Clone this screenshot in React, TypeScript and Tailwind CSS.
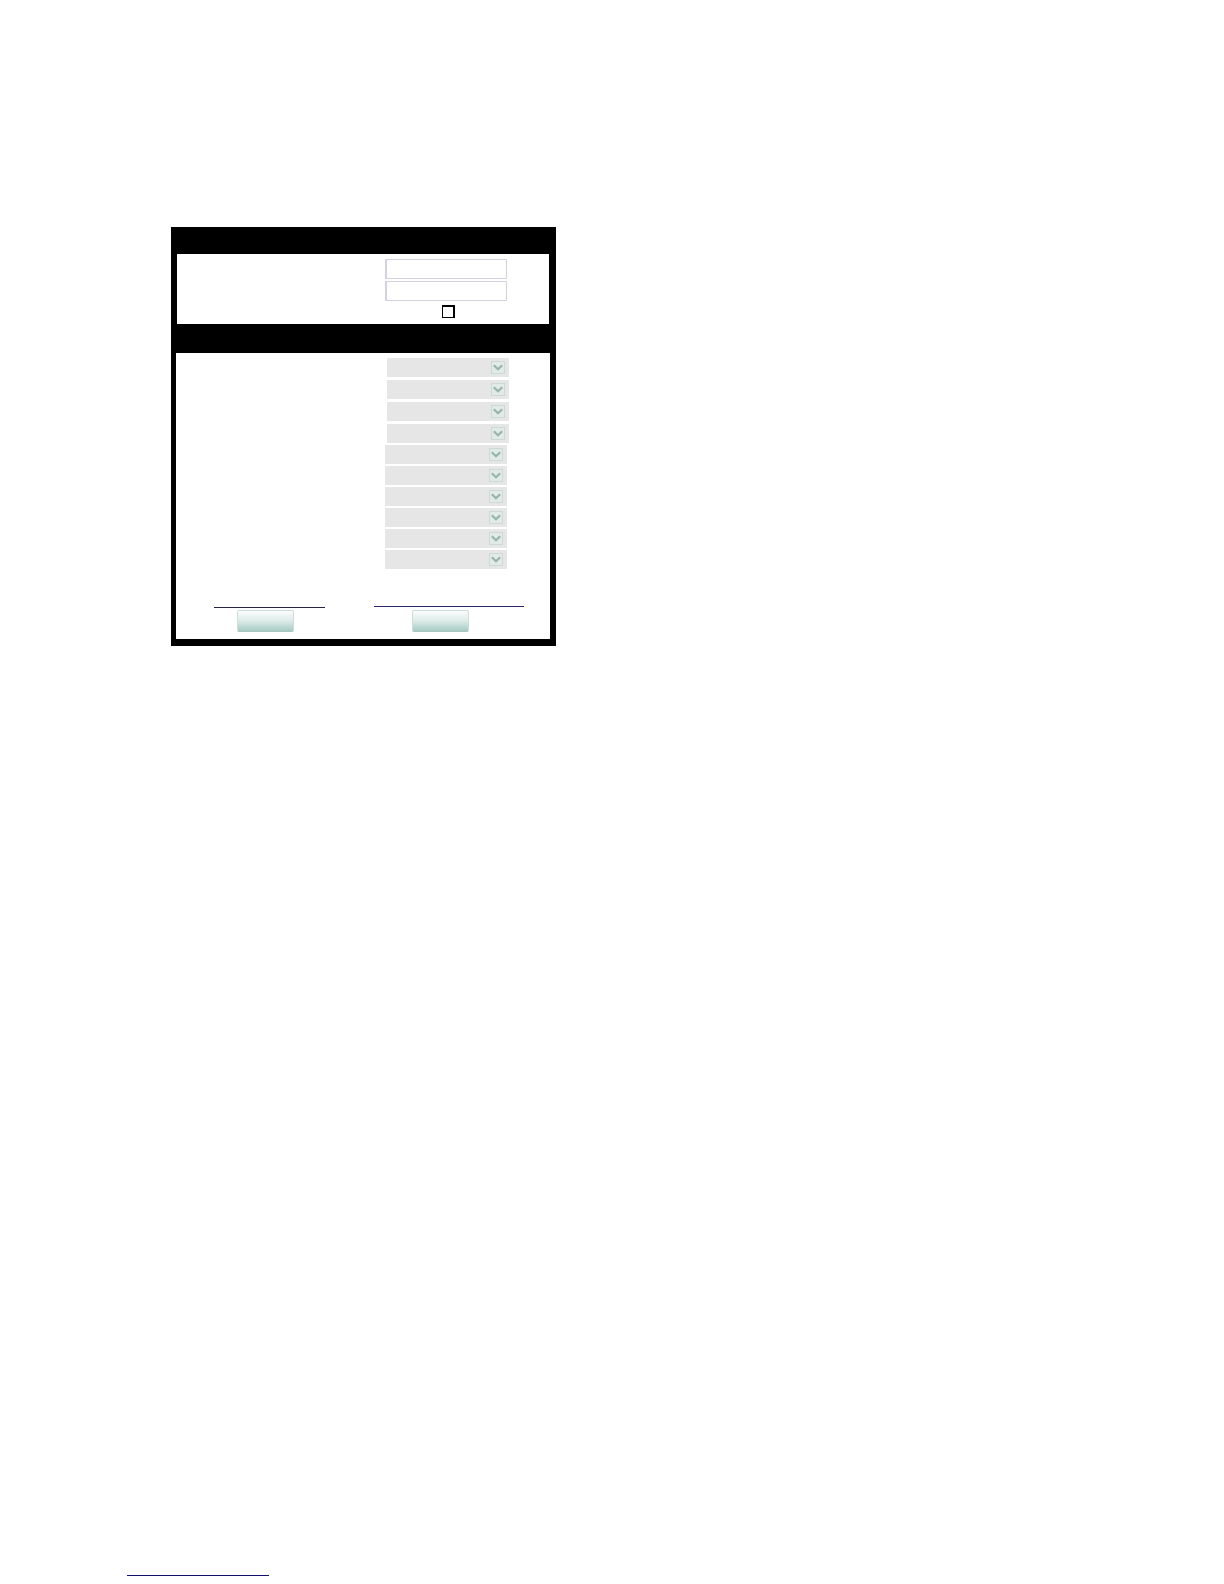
const GENERAL_OPTIONS = ['option-1', 'option-2', 'option-3', 'option-4'];
const EXTRA_OPTIONS = ['option-5', 'option-6', 'option-7', 'option-8', 'option-9', 'option-10'];

function TextField({ id }: { id: string }) {
  return (
    <input
      id={id}
      type="text"
      aria-label={id}
      className="h-5 w-[122px] bg-white border border-l-2 border-[#d2d2e2] px-1 text-xs outline-none"
    />
  );
}

function SelectField({ id }: { id: string }) {
  return (
    <div className="relative w-[122px]">
      <select
        id={id}
        aria-label={id}
        className="block h-[19px] w-full appearance-none rounded-none bg-[#e6e6e6] px-2 text-xs outline-none"
      >
        <option value="" />
      </select>
      {/* Drop-down arrow */}
      <svg
        className="pointer-events-none absolute right-1 top-[3px]"
        width="14"
        height="14"
        viewBox="0 0 14 14"
        fill="none"
      >
        <rect x="0.5" y="0.5" width="13" height="12" fill="#e2eae8" stroke="#cbdad6" />
        <path d="M2.8 4.2 L7 8.2 L11.2 4.2" stroke="#96b5ad" strokeWidth="2.2" />
      </svg>
    </div>
  );
}

function ActionButton({ label }: { label: string }) {
  return (
    <button
      type="button"
      aria-label={label}
      className="block h-[22px] w-[57px] rounded-[2px] border border-[#cddedb] border-b-[#a9c6c0] bg-gradient-to-b from-[#fbfdfd] via-[#dcebe8] to-[#a6cbc4]"
    />
  );
}

export default function App() {
  return (
    <div className="flex min-h-screen flex-col bg-white font-['Liberation_Sans',Arial,sans-serif]">
      <main className="px-[171px] pt-[227px]">
        <form className="w-full max-w-[385px] bg-black pb-[7px]" onSubmit={(e) => e.preventDefault()}>
          <div className="h-[27px]" />

          {/* Text fields */}
          <section className="ml-[6px] mr-[7px] flex flex-col items-end bg-white pt-[5px] pr-[42px] pb-[6px]">
            <div className="flex flex-col gap-[2px]">
              <TextField id="field-1" />
              <TextField id="field-2" />
            </div>
            <div className="flex w-[122px] justify-center pt-1 pl-1">
              <input
                id="enable"
                type="checkbox"
                aria-label="enable"
                className="block size-[13px] appearance-none border border-t-2 border-r-2 border-black bg-white checked:bg-black"
              />
            </div>
          </section>

          <div className="h-[29px]" />

          <section className="ml-[5px] mr-[6px] bg-white pt-[5px] pb-[7px]">
            {/* Drop-downs */}
            <div className="flex flex-col items-end gap-[2px] pr-[41px]">
              <div className="flex flex-col gap-[3px]">
                {GENERAL_OPTIONS.map((id) => (
                  <SelectField key={id} id={id} />
                ))}
              </div>
              <div className="flex flex-col gap-[2px] pr-[2px]">
                {EXTRA_OPTIONS.map((id) => (
                  <SelectField key={id} id={id} />
                ))}
              </div>
            </div>

            {/* Links and buttons */}
            <div className="flex gap-[49px] pt-6 pl-[38px]">
              <div className="flex flex-col gap-[2px]">
                <a href="#first" aria-label="first" className="block h-[15px] w-[111px] border-b border-[#25253f]" />
                <div className="pl-[23px]">
                  <ActionButton label="first" />
                </div>
              </div>
              <div className="flex flex-col gap-[3px]">
                <a href="#second" aria-label="second" className="block h-[14px] w-[150px] border-b border-[#2a2468]" />
                <div className="pl-[38px]">
                  <ActionButton label="second" />
                </div>
              </div>
            </div>
          </section>
        </form>
      </main>

      <footer className="mt-auto px-[127px] pb-2">
        <a href="#contents" aria-label="contents" className="block h-4 w-[142px] border-b border-[#10106e]" />
      </footer>
    </div>
  );
}
